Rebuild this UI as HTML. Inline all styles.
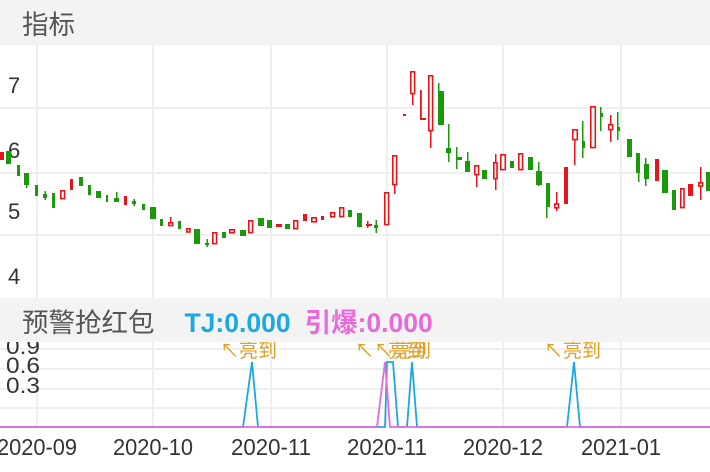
<!DOCTYPE html>
<html><head><meta charset="utf-8"><style>
body{margin:0;width:710px;height:472px;overflow:hidden;background:#fff;font-family:"Liberation Sans","Noto Sans CJK SC",sans-serif;position:relative}
.hd{position:absolute;left:0;width:710px;background:#f3f3f3}
.row{position:absolute;left:22px;top:0;height:44px;line-height:50px;white-space:nowrap;font-size:26.5px}
</style></head><body>
<svg width="710" height="472" style="position:absolute;left:0;top:0" xmlns="http://www.w3.org/2000/svg">
<g stroke="#efefef" stroke-width="2">
<line x1="0" y1="108" x2="710" y2="108"/><line x1="0" y1="173" x2="710" y2="173"/><line x1="0" y1="235" x2="710" y2="235"/>
<line x1="37" y1="45" x2="37" y2="298"/><line x1="153" y1="45" x2="153" y2="298"/><line x1="271" y1="45" x2="271" y2="298"/><line x1="387" y1="45" x2="387" y2="298"/><line x1="503" y1="45" x2="503" y2="298"/><line x1="621" y1="45" x2="621" y2="298"/>
<line x1="0" y1="349" x2="710" y2="349"/><line x1="0" y1="369" x2="710" y2="369"/><line x1="0" y1="389" x2="710" y2="389"/><line x1="0" y1="408" x2="710" y2="408"/>
<line x1="37" y1="342" x2="37" y2="428"/><line x1="153" y1="342" x2="153" y2="428"/><line x1="271" y1="342" x2="271" y2="428"/><line x1="387" y1="342" x2="387" y2="428"/><line x1="503" y1="342" x2="503" y2="428"/><line x1="621" y1="342" x2="621" y2="428"/>
</g>
<g font-size="22" fill="#333"><text x="8" y="93">7</text><text x="8" y="158">6</text><text x="8" y="219">5</text><text x="8" y="284">4</text></g>
<g fill="#1a9a0a">
<rect x="6" y="151" width="5" height="13"/><rect x="17" y="165" width="3" height="11"/><rect x="24" y="173" width="5" height="12"/><rect x="26" y="183" width="1.5" height="5"/>
<rect x="35" y="185" width="3" height="11"/><rect x="43" y="194" width="4" height="4"/><rect x="44.5" y="191" width="1.5" height="9"/>
<rect x="52" y="193" width="3" height="15"/><rect x="79" y="177" width="4" height="9"/><rect x="88" y="185" width="3" height="10"/>
<rect x="96" y="191" width="5" height="7"/><rect x="106" y="195" width="2" height="7"/><rect x="114" y="198" width="5" height="4"/><rect x="116" y="192" width="1.5" height="8"/>
<rect x="132" y="201" width="4" height="3"/><rect x="133.5" y="199" width="1.5" height="7"/><rect x="142" y="204" width="3" height="6"/><rect x="150" y="207" width="6" height="12"/>
<rect x="160" y="219" width="3" height="7"/><rect x="178" y="221" width="3" height="8"/><rect x="194" y="229" width="6" height="15"/>
<rect x="205" y="243" width="4" height="2"/><rect x="206.5" y="239" width="1.5" height="8"/><rect x="222" y="232" width="4" height="6"/>
<rect x="240" y="230" width="6" height="6"/><rect x="258" y="218" width="6" height="8"/><rect x="267" y="220" width="5" height="8"/>
<rect x="285" y="224" width="5" height="5"/><rect x="348" y="210" width="4" height="7"/><rect x="357" y="213" width="5" height="14"/>
<rect x="374" y="225" width="4" height="3"/><rect x="375.5" y="220" width="1.5" height="13"/>
<rect x="438" y="91" width="6" height="34"/><rect x="438" y="83" width="1.5" height="10"/>
<rect x="446" y="148" width="5" height="5"/><rect x="448" y="124" width="1.5" height="38"/>
<rect x="456" y="157" width="6" height="3"/><rect x="456" y="147" width="1.5" height="22"/>
<rect x="465" y="161" width="5" height="11"/><rect x="467" y="152" width="1.5" height="20"/>
<rect x="482" y="170" width="5" height="9"/><rect x="510" y="161" width="4" height="7"/><rect x="528" y="157" width="5" height="13"/>
<rect x="536" y="171" width="6" height="14"/><rect x="538" y="162" width="1.5" height="24"/>
<rect x="546" y="183" width="4" height="24"/><rect x="546" y="200" width="1.5" height="18"/>
<rect x="582" y="141" width="3" height="7"/><rect x="582" y="121" width="1.5" height="37"/>
<rect x="600" y="113" width="3" height="4"/><rect x="600" y="107" width="1.5" height="24"/>
<rect x="617" y="127" width="3" height="4"/><rect x="617" y="112" width="1.5" height="28"/>
<rect x="627" y="139" width="5" height="18"/><rect x="636" y="153" width="4" height="20"/><rect x="638" y="170" width="1.5" height="12"/>
<rect x="644" y="164" width="5" height="15"/><rect x="645" y="158" width="1.5" height="28"/><rect x="662" y="170" width="6" height="23"/>
<rect x="672" y="190" width="4" height="20"/><rect x="706" y="172" width="4" height="19"/>
</g>
<g fill="#e8141c">
<rect x="0" y="152" width="4" height="8"/><rect x="70" y="179" width="3" height="11"/><rect x="124" y="196" width="3" height="9"/>
<rect x="276" y="224" width="6" height="3"/><rect x="303" y="214" width="4" height="7"/><rect x="321" y="216" width="3" height="4"/>
<rect x="366" y="224" width="6" height="2"/><rect x="367" y="221" width="1.5" height="7"/><rect x="403" y="114" width="3" height="2"/>
<rect x="420" y="90" width="1.8" height="30"/><rect x="420" y="118" width="6" height="2"/>
<rect x="412" y="94" width="1.5" height="11"/><rect x="430" y="131" width="1.5" height="17"/><rect x="394" y="185" width="1.5" height="9"/>
<rect x="476" y="175" width="1.5" height="12"/><rect x="495" y="154" width="1.5" height="36"/><rect x="556" y="192" width="1.5" height="19"/>
<rect x="564" y="167" width="4" height="37"/><rect x="574" y="140" width="1.5" height="25"/><rect x="610" y="115" width="1.5" height="27"/>
<rect x="655" y="159" width="4" height="22"/><rect x="688" y="184" width="5" height="12"/><rect x="700" y="167" width="1.5" height="33"/>
<rect x="170" y="217" width="1.5" height="6"/>
</g>
<g fill="#fff" stroke="#e8141c" stroke-width="1.6">
<rect x="60.8" y="190.8" width="3.8" height="7.8"/><rect x="168.8" y="222.8" width="3.8" height="2.8"/><rect x="186.8" y="228.8" width="3.2" height="3.2"/>
<rect x="212.8" y="232.8" width="3.8" height="10.8"/><rect x="229.8" y="229.8" width="4.5" height="3"/><rect x="248.8" y="220.8" width="3.8" height="11.8"/>
<rect x="293.8" y="220.8" width="3.8" height="7.8"/><rect x="311.8" y="217.8" width="4.5" height="4"/><rect x="330.8" y="212.8" width="3.8" height="4"/>
<rect x="339.8" y="207.8" width="3.8" height="8.8"/><rect x="384.8" y="192.8" width="3.8" height="31.8"/><rect x="392.8" y="155.8" width="3.8" height="28.8"/>
<rect x="410.8" y="71.8" width="3.8" height="21.8"/><rect x="428.8" y="75.8" width="3.8" height="54.8"/><rect x="474.8" y="165.8" width="3.8" height="8.8"/>
<rect x="493.8" y="162.8" width="3.2" height="15.8"/><rect x="500.8" y="154.8" width="4.5" height="14.8"/><rect x="518.8" y="153.8" width="3.8" height="15.8"/>
<rect x="554.8" y="204" width="3.8" height="3.8"/><rect x="572.8" y="129.8" width="4.5" height="9.8"/><rect x="590.8" y="106.8" width="4.5" height="40.8"/>
<rect x="608.8" y="124.8" width="3.8" height="4.8"/><rect x="680.8" y="188.8" width="3.2" height="18.8"/><rect x="698.8" y="182.8" width="3.8" height="3.2"/>
</g>
<g font-size="22" fill="#333"><text x="6" y="354" textLength="34" lengthAdjust="spacingAndGlyphs">0.9</text><text x="6" y="373" textLength="34" lengthAdjust="spacingAndGlyphs">0.6</text><text x="6" y="393" textLength="34" lengthAdjust="spacingAndGlyphs">0.3</text></g>
<g font-size="19" fill="#e0a020">
<text x="220" y="357">↖亮到</text><text x="355" y="357">↖↖亮到</text><text x="388" y="357">亮到</text><text x="544" y="357">↖亮到</text></g>
<g fill="none" stroke-width="1.8">
<polyline stroke="#1aa9e0" points="0,427 243,427 252,362 258,427 385,427 387,362 393,362 398,427 407,427 412,362 417,427 567,427 574,362 580,427 710,427"/>
<polyline stroke="#e86ad8" points="0,427 377,427 385,362 390,427 710,427"/>
</g>
<g font-size="23" fill="#333" text-anchor="middle"><text x="37" y="455" textLength="80" lengthAdjust="spacingAndGlyphs">2020-09</text><text x="153" y="455" textLength="80" lengthAdjust="spacingAndGlyphs">2020-10</text><text x="271" y="455" textLength="80" lengthAdjust="spacingAndGlyphs">2020-11</text><text x="387" y="455" textLength="80" lengthAdjust="spacingAndGlyphs">2020-11</text><text x="503" y="455" textLength="80" lengthAdjust="spacingAndGlyphs">2020-12</text><text x="621" y="455" textLength="80" lengthAdjust="spacingAndGlyphs">2021-01</text></g>
</svg>
<div class="hd" style="top:0;height:45px"><div class="row" style="color:#555">指标</div></div>
<div class="hd" style="top:298px;height:44px"><div class="row"><span style="color:#555">预警抢红包</span><span style="display:inline-block;width:30px"></span><span style="font-weight:bold;color:#1aa9e0">TJ:0.000</span><span style="display:inline-block;width:14px"></span><span style="font-weight:bold;color:#e86ad8">引爆:0.000</span></div></div>
</body></html>
